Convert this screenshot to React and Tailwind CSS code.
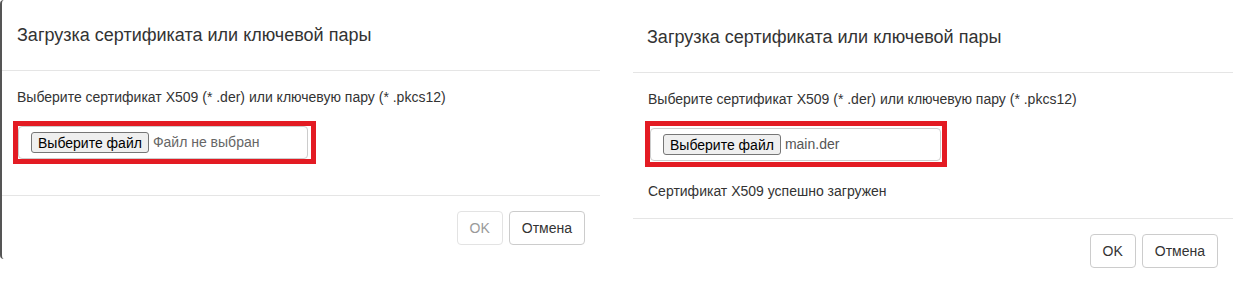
import React from 'react';

const font = { fontFamily: '"Liberation Sans", Arial, sans-serif' };

const FileInput = ({ fileName, muted, boxClass, inputClass }) => (
    <div className={`border-[5px] border-[#e31b23] ${boxClass}`}>
        <div className={`flex items-center h-[33px] border border-[#ccc] rounded-[4px] bg-white pl-[12px] ${inputClass}`}>
            <div className="h-[21px] px-[6px] flex items-center border border-[#767676] rounded-[3px] bg-[#efefef] text-[14px] text-black leading-none">
                Выберите файл
            </div>
            <span className={`ml-[4px] text-[14px] ${muted ? 'text-[#666]' : 'text-[#555]'}`}>{fileName}</span>
        </div>
    </div>
);

const Footer = ({ okDisabled, className }) => (
    <div className={`flex justify-end gap-[6px] px-[15px] ${className}`}>
        <button
            className={`h-[34px] px-[12px] border rounded-[4px] bg-white text-[14px] ${okDisabled ? 'border-[#e3e3e3] text-[#9a9a9a]' : 'border-[#ccc] text-[#333]'}`}
        >
            OK
        </button>
        <button className="h-[34px] px-[12px] border border-[#ccc] rounded-[4px] bg-white text-[14px] text-[#333]">
            Отмена
        </button>
    </div>
);

export default function App() {
    return (
        <div className="w-[1233px] h-[281px] bg-white flex gap-[33px] overflow-hidden" style={font}>
            {/* left: before upload */}
            <div className="w-[600px] h-[259px] bg-white border-l-2 border-[#555] rounded-l-[4px] flex flex-col">
                <div className="h-[71px] flex items-center pl-[15px] border-b border-[#e5e5e5]">
                    <h4 className="text-[18px] leading-[26px] text-[#333]">Загрузка сертификата или ключевой пары</h4>
                </div>
                <div className="h-[125px] pt-[16px] pl-[15px] border-b border-[#e5e5e5]">
                    <p className="text-[14px] leading-[20px] text-[#333]">
                        Выберите сертификат X509 (* .der) или ключевую пару (* .pkcs12)
                    </p>
                    <FileInput
                        fileName="Файл не выбран"
                        muted
                        boxClass="mt-[14px] -ml-[4px] w-[303px] pr-[3px]"
                        inputClass="w-[290px]"
                    />
                </div>
                <Footer okDisabled className="pt-[15px]" />
            </div>

            {/* right: after upload */}
            <div className="w-[600px] h-[279px] mt-[2px] bg-white rounded-[4px] flex flex-col">
                <div className="h-[71px] flex items-center pl-[14px] border-b border-[#e5e5e5]">
                    <h4 className="text-[18px] leading-[26px] text-[#333]">Загрузка сертификата или ключевой пары</h4>
                </div>
                <div className="h-[146px] pt-[16px] pl-[15px] border-b border-[#e5e5e5]">
                    <p className="text-[14px] leading-[20px] text-[#333]">
                        Выберите сертификат X509 (* .der) или ключевую пару (* .pkcs12)
                    </p>
                    <FileInput
                        fileName="main.der"
                        boxClass="mt-[12px] -ml-[3px] w-[302px] pt-[2px] pb-[1px] pr-[1px]"
                        inputClass="w-[291px]"
                    />
                    <p className="mt-[14px] text-[14px] leading-[20px] text-[#333]">Сертификат X509 успешно загружен</p>
                </div>
                <Footer className="pt-[15px]" />
            </div>
        </div>
    );
}
